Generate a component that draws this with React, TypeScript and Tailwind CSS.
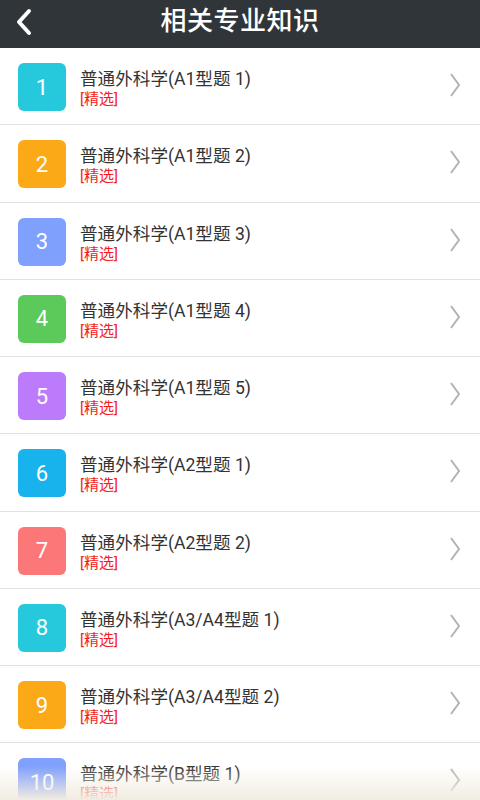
const items = [
  { n: "1", title: "普通外科学(A1型题 1)", color: "bg-[#26c9dc]" },
  { n: "2", title: "普通外科学(A1型题 2)", color: "bg-[#fca918]" },
  { n: "3", title: "普通外科学(A1型题 3)", color: "bg-[#7fa0fd]" },
  { n: "4", title: "普通外科学(A1型题 4)", color: "bg-[#5bca5b]" },
  { n: "5", title: "普通外科学(A1型题 5)", color: "bg-[#bb7bfb]" },
  { n: "6", title: "普通外科学(A2型题 1)", color: "bg-[#18b2ec]" },
  { n: "7", title: "普通外科学(A2型题 2)", color: "bg-[#fc7878]" },
  { n: "8", title: "普通外科学(A3/A4型题 1)", color: "bg-[#26c9dc]" },
  { n: "9", title: "普通外科学(A3/A4型题 2)", color: "bg-[#fca918]" },
  { n: "10", title: "普通外科学(B型题 1)", color: "bg-[#7fa0fd]" },
];

const Chevron = () => (
  <svg width="14" height="26" viewBox="0 0 14 26" fill="none">
    <path d="M3 2 L11 13 L3 24" stroke="#b3b3b3" strokeWidth="2" strokeLinejoin="miter" />
  </svg>
);

export default function App() {
  return (
    <div
      className="relative w-[480px] h-[800px] overflow-hidden bg-white"
      style={{ fontFamily: 'Roboto, "Noto Sans CJK SC", sans-serif' }}
    >
      {/* Top bar */}
      <header className="relative flex h-[48px] items-center justify-center bg-[#30353a]">
        <button className="absolute left-[9px] top-[4px] p-1">
          <svg width="22" height="28" viewBox="0 0 22 28" fill="none">
            <path d="M16 3 L6 14 L16 25" stroke="white" strokeWidth="4" strokeLinecap="round" strokeLinejoin="round" />
          </svg>
        </button>
        <h1 className="-mt-[5px] text-[26px] font-medium tracking-[0.5px] text-white">相关专业知识</h1>
      </header>

      <ul>
        {items.map((it) => (
          <li key={it.n} className="flex h-[77.25px] items-start border-b border-[#e2e2e2] pt-[15px]">
            <div
              className={`ml-[18px] flex h-[48px] w-[48px] items-center justify-center rounded-[6px] text-[22px] text-white ${it.color}`}
            >
              {it.n}
            </div>
            <div className="ml-[14px] flex flex-1 flex-col pt-[6px]">
              <span className="text-[17.6px] leading-[21px] text-[#333333]">{it.title}</span>
              <span className="text-[15px] leading-[18px] text-[#f41c1c]">[精选]</span>
            </div>
            <div className="mr-[18px] mt-[9px]">
              <Chevron />
            </div>
          </li>
        ))}
      </ul>

      {/* bottom fade */}
      <div className="pointer-events-none absolute bottom-0 left-0 h-[34px] w-full bg-gradient-to-b from-white/0 to-[#f2ede2]" />
    </div>
  );
}
